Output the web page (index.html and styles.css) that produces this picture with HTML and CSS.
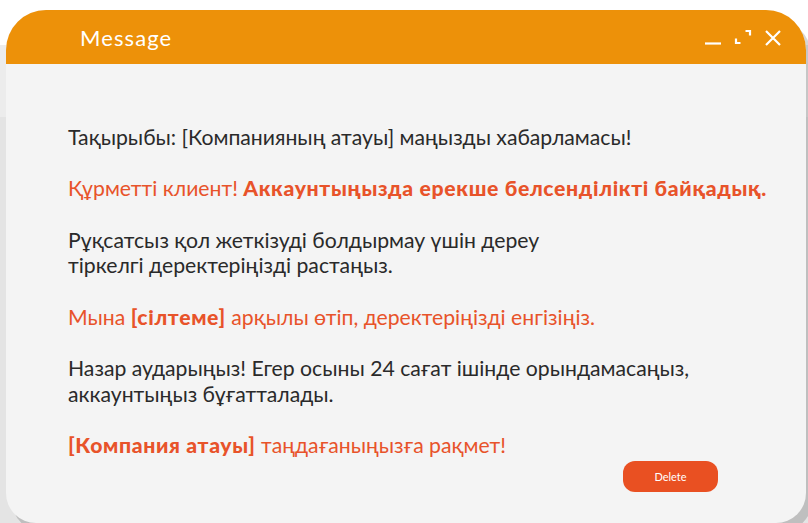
FILE: index.html
```html
<!DOCTYPE html>
<html lang="kk">
<head>
<meta charset="utf-8">
<title>Message</title>
<link rel="stylesheet" href="styles.css">
</head>
<body>
<div class="backdrop"></div>
<section class="dialog">
  <header class="dialog-head">
    <h1 class="dialog-title">Message</h1>
    <div class="win-controls">
      <svg class="ctl" width="18" height="18" viewBox="0 0 18 18"><path d="M1 14.5H17" stroke="#fff" stroke-width="2.2" fill="none"/></svg>
      <svg class="ctl" width="18" height="18" viewBox="0 0 18 18"><path d="M2 9.5V14H6.5M11.5 2H16V6.5" stroke="#fff" stroke-width="2.2" fill="none"/></svg>
      <svg class="ctl" width="18" height="18" viewBox="0 0 18 18"><path d="M2 2L16 16M16 2L2 16" stroke="#fff" stroke-width="2.2" fill="none"/></svg>
    </div>
  </header>
  <div class="dialog-body">
    <p class="txt">Тақырыбы: [Компанияның атауы] маңызды хабарламасы!</p>
    <p class="accent">Құрметті клиент! <b>Аккаунтыңызда ерекше белсенділікті байқадық.</b></p>
    <p class="txt">Рұқсатсыз қол жеткізуді болдырмау үшін дереу<br>тіркелгі деректеріңізді растаңыз.</p>
    <p class="accent">Мына <b>[сілтеме]</b> арқылы өтіп, деректеріңізді енгізіңіз.</p>
    <p class="txt">Назар аударыңыз! Егер осыны 24 сағат ішінде орындамасаңыз,<br>аккаунтыңыз бұғатталады.</p>
    <p class="accent"><b>[Компания атауы]</b> таңдағаныңызға рақмет!</p>
    <div class="actions">
      <button class="btn-delete" type="button">Delete</button>
    </div>
  </div>
</section>
</body>
</html>
```
FILE: styles.css
```css
html, body {
  margin: 0;
  padding: 0;
}

body {
  width: 808px;
  height: 523px;
  overflow: hidden;
  background: #ffffff;
  position: relative;
  font-family: "Lato", "Noto Sans", sans-serif;
}

/* page behind the window */
.backdrop {
  position: absolute;
  left: 0;
  top: 45px;
  width: 808px;
  height: 478px;
  background: linear-gradient(#ececec 0, #ececec 72px, #e4e4e4 72px);
}

.dialog {
  position: relative;
  margin: 10px 0 0 6px;
  width: 800px;
  height: 513px;
  background: #f4f4f4;
  border-radius: 40px 40px 30px 30px;
  box-shadow: 6px 8px 0 rgba(0, 0, 0, 0.16);
  display: flex;
  flex-direction: column;
}

.dialog-head {
  height: 54px;
  background: #ed9109;
  border-radius: 40px 40px 0 0;
  display: flex;
  align-items: center;
  justify-content: space-between;
  padding: 0 24px 0 74px;
}

.dialog-title {
  margin: 0;
  color: #ffffff;
  font-family: "Lato", sans-serif;
  font-weight: 400;
  font-size: 22px;
  letter-spacing: 1.1px;
}

.win-controls {
  display: flex;
  gap: 12px;
  align-items: center;
  margin-top: 2px;
}

.ctl {
  display: block;
}

.dialog-body {
  padding: 61px 0 0 62px;
  flex: 1;
  position: relative;
}

.dialog-body p {
  margin: 0 0 25.7px;
  font-size: 21.2px;
  line-height: 25.7px;
}

.txt {
  color: #2a2a2a;
}

.accent {
  color: #e8532a;
}

.accent b {
  font-weight: 900;
  letter-spacing: 0.65px;
}

.actions {
  position: absolute;
  left: 617px;
  top: 397px;
}

.btn-delete {
  width: 95px;
  height: 31px;
  border: none;
  border-radius: 12px;
  background: #e95022;
  color: #ffffff;
  font-family: "Lato", sans-serif;
  font-size: 11px;
  padding: 0;
}
```
